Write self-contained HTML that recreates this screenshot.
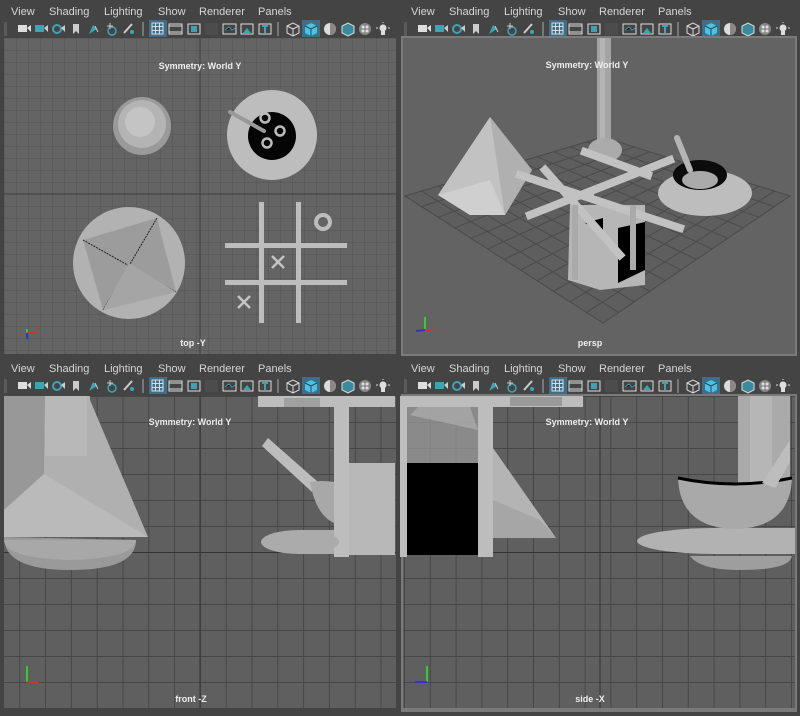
<!DOCTYPE html>
<html><head><meta charset="utf-8"><style>
html,body{margin:0;padding:0;background:#444;width:800px;height:716px;overflow:hidden}
svg{display:block}
text{font-family:"Liberation Sans",sans-serif}
.m{fill:#d6d6d6;font-size:11px}
.l{fill:#eee;font-size:9px;font-weight:bold}
</style></head><body>
<svg width="800" height="716" viewBox="0 0 800 716" xmlns="http://www.w3.org/2000/svg">
<defs>
<pattern id="gt" x="4" y="38" width="12" height="12" patternUnits="userSpaceOnUse"><rect width="12" height="12" fill="#646464"/><path d="M0 0H12M0 0V12" stroke="#535353" stroke-width="1"/></pattern>
<pattern id="gf" x="-6.5" y="396" width="25.8" height="26" patternUnits="userSpaceOnUse"><rect width="26" height="26" fill="#5f5f5f"/><path d="M0 0.5H26M0.5 0V26" stroke="#474747" stroke-width="1"/></pattern>
<pattern id="gs" x="404" y="396" width="25.8" height="26" patternUnits="userSpaceOnUse"><rect width="26" height="26" fill="#5f5f5f"/><path d="M0 0.5H26M0.5 0V26" stroke="#474747" stroke-width="1"/></pattern>
<g id="tb">
 <rect x="4" y="22" width="3" height="14" fill="#5a5a5a"/>
 <rect x="18" y="25" width="9" height="7" fill="#ddd"/><path d="M27 28l4-3v7z" fill="#ddd"/>
 <rect x="35" y="25" width="9" height="7" fill="#3fa3b5"/><path d="M44 28l4-3v7z" fill="#ccc"/>
 <circle cx="57" cy="29" r="4" fill="none" stroke="#3fa3b5" stroke-width="2"/><path d="M61 28l4-3v7z" fill="#ccc"/>
 <path d="M73 24h6v10l-3-3-3 3z" fill="#ccc"/>
 <path d="M89 34l4-9 4 4z" fill="#3fa3b5"/><path d="M95 26l3 6" stroke="#ccc"/>
 <circle cx="112" cy="31" r="4" fill="none" stroke="#3fa3b5" stroke-width="1.5"/><path d="M107 26h6M110 23v6" stroke="#ccc"/>
 <path d="M124 33l8-9" stroke="#ccc" stroke-width="2"/><circle cx="132" cy="32" r="2" fill="#3fa3b5"/>
 <rect x="142" y="22" width="2" height="14" fill="#777"/>
 <rect x="149" y="20" width="18" height="17" fill="#3f6e8a"/>
 <rect x="152" y="23" width="11" height="11" fill="none" stroke="#ddd"/><path d="M155.5 23v11M159.5 23v11M152 26.5h11M152 30.5h11" stroke="#ddd"/>
 <rect x="169" y="24" width="13" height="10" fill="none" stroke="#ddd"/><path d="M169 26h13M169 32h13" stroke="#ddd"/>
 <rect x="188" y="24" width="12" height="10" fill="none" stroke="#ddd"/><rect x="191" y="26" width="6" height="6" fill="#3fa3b5"/>
 <rect x="205" y="23" width="13" height="12" fill="#4c4c4c"/>
 <rect x="223" y="24" width="13" height="10" fill="none" stroke="#ddd"/><path d="M225 30l4-3 3 3 3-2" stroke="#3fa3b5"/>
 <rect x="241" y="24" width="12" height="10" fill="none" stroke="#ddd"/><path d="M243 33l4-5 4 5z" fill="#3fa3b5"/>
 <rect x="259" y="24" width="12" height="10" fill="none" stroke="#ddd"/><path d="M262 26h6M265 26v7" stroke="#3fa3b5" stroke-width="2"/>
 <rect x="277" y="22" width="2" height="14" fill="#777"/>
 <path d="M287 26l6-3 6 3v7l-6 3-6-3z M287 26l6 3 6-3 M293 29v7" fill="none" stroke="#ddd"/>
 <rect x="302" y="20" width="18" height="17" fill="#3f6e8a"/>
 <path d="M305 26l6-3 6 3v7l-6 3-6-3z" fill="#4fc3dd"/><path d="M305 26l6 3 6-3M311 29v7" stroke="#246" fill="none"/>
 <circle cx="330" cy="29" r="6" fill="#ddd"/><path d="M330 23a6 6 0 0 1 0 12z" fill="#888"/>
 <path d="M342 26l6-3 6 3v7l-6 3-6-3z" fill="#3a8aa0" stroke="#ddd"/>
 <circle cx="365" cy="29" r="6" fill="#888"/><circle cx="363" cy="27" r="1.5" fill="#ddd"/><circle cx="367" cy="31" r="1.5" fill="#ddd"/><circle cx="363" cy="31" r="1.5" fill="#ddd"/><circle cx="367" cy="27" r="1.5" fill="#ddd"/>
 <circle cx="383" cy="28" r="3.5" fill="#ddd"/><rect x="381" y="31" width="4" height="4" fill="#ddd"/><path d="M376 28h2M388 28h2M383 22v1" stroke="#ddd"/>
</g>
<g id="mn">
 <text class="m" x="11" y="15">View</text><text class="m" x="49" y="15">Shading</text><text class="m" x="104" y="15">Lighting</text><text class="m" x="158" y="15">Show</text><text class="m" x="199" y="15">Renderer</text><text class="m" x="258" y="15">Panels</text>
</g>
</defs>

<use href="#mn"/><use href="#tb"/>
<use href="#mn" x="400"/><use href="#tb" x="400"/>
<use href="#mn" y="357"/><use href="#tb" y="357"/>
<use href="#mn" x="400" y="357"/><use href="#tb" x="400" y="357"/>

<!-- TOP VIEW -->
<rect x="4" y="38" width="392" height="316" fill="url(#gt)"/>
<path d="M4 194H396M200 38V354" stroke="#3e3e3e"/>
<circle cx="142" cy="126" r="29" fill="#9a9a9a"/><circle cx="142" cy="124" r="24" fill="#b4b4b4"/><circle cx="140" cy="122" r="15" fill="#c4c4c4"/>
<circle cx="272" cy="135" r="45" fill="#bdbdbd"/><circle cx="272" cy="136" r="24" fill="#050505"/>
<g fill="none" stroke="#bbb" stroke-width="2.5"><circle cx="265" cy="118" r="4.5"/><circle cx="280" cy="131" r="4.5"/><circle cx="267" cy="143" r="4.5"/></g>
<path d="M230 112L264 131" stroke="#999" stroke-width="4" stroke-linecap="round"/>
<circle cx="129" cy="263" r="56" fill="#b2b2b2"/>
<path d="M157 218L176 292L103 310L83 240Z" fill="#9c9c9c"/>
<path d="M83 240L176 292M157 218L103 310" stroke="#222" stroke-width="1" stroke-dasharray="2 1"/>
<path d="M129 263L176 292L103 310Z" fill="#a5a5a5"/>
<g fill="#bdbdbd"><rect x="259" y="202" width="5" height="121"/><rect x="296" y="202" width="5" height="121"/><rect x="225" y="243" width="122" height="5"/><rect x="225" y="280" width="122" height="5"/></g>
<circle cx="323" cy="222" r="7" fill="none" stroke="#bdbdbd" stroke-width="4"/>
<path d="M272 256l12 12M284 256l-12 12M238 296l12 12M250 296l-12 12" stroke="#c4c4c4" stroke-width="2.5"/>
<text class="l" x="200" y="69" text-anchor="middle">Symmetry: World Y</text>
<text class="l" x="193" y="346" text-anchor="middle">top -Y</text>
<path d="M27 329V337" stroke="#3c3" stroke-width="2"/><path d="M27 333h10" stroke="#c33" stroke-width="2"/><path d="M27 333v6" stroke="#33c" stroke-width="2"/>
<text x="36" y="330" fill="#c33" font-size="7">x</text>

<!-- PERSP -->
<rect x="401" y="36" width="396" height="320" fill="#7a7a7a"/>
<rect x="403" y="38" width="392" height="316" fill="#636363"/>
<g stroke="#4a4a4a" stroke-width="1" fill="none">
<path d="M405 196L603 137L790 196L603 323Z" fill="#5e5e5e"/>
<path d="M421.5 191.1L618.6 312.4M438 186.2L634.2 301.8M454.5 181.3L649.8 291.3M471 176.3L665.3 280.7M487.5 171.4L680.9 270.1M504 166.5L696.5 259.5M520.5 161.6L712.1 248.9M537 156.7L727.7 238.3M553.5 151.8L743.3 227.8M570 146.8L758.8 217.2M586.5 141.9L774.4 206.6"/>
<path d="M421.5 206.6L618.6 141.9M438 217.2L634.2 146.8M454.5 227.8L649.8 151.8M471 238.3L665.3 156.7M487.5 248.9L680.9 161.6M504 259.5L696.5 166.5M520.5 270.1L712.1 171.4M537 280.7L727.7 176.3M553.5 291.3L743.3 181.3M570 301.8L758.8 186.2M586.5 312.4L774.4 191.1"/>
</g>
<rect x="597" y="38" width="14" height="114" fill="#a4a4a4"/><rect x="600" y="38" width="5" height="114" fill="#b4b4b4"/>
<ellipse cx="605" cy="150" rx="17" ry="12" fill="#ababab"/>
<path d="M490 117L438 195L470 215L505 215L532 170Z" fill="#c2c2c2"/><path d="M490 117L505 215L532 170Z" fill="#b0b0b0"/><path d="M438 195L470 215L505 215L490 180Z" fill="#cfcfcf"/>
<ellipse cx="705" cy="193" rx="47" ry="23" fill="#bdbdbd"/>
<ellipse cx="700" cy="175" rx="27" ry="15" fill="#0c0c0c"/><ellipse cx="700" cy="180" rx="18" ry="9" fill="#aaa"/>
<path d="M677 138L690 170" stroke="#b5b5b5" stroke-width="6" stroke-linecap="round"/>
<path d="M570 205L645 205L645 285L600 290L568 280Z" fill="#b6b6b6"/>
<path d="M618 228L645 222L645 270L618 283Z" fill="#000"/><path d="M585 223L603 218L603 232Z" fill="#000"/>
<g stroke="#c2c2c2" stroke-width="8" stroke-linecap="square">
<path d="M520 175L680 228M530 215L670 160M585 152L648 175M570 195L590 195M545 170L620 255"/>
</g>
<g stroke="#aaa" stroke-width="6"><path d="M575 205V280M633 205V270"/></g>
<text class="l" x="587" y="68" text-anchor="middle">Symmetry: World Y</text>
<text class="l" x="590" y="346" text-anchor="middle">persp</text>
<path d="M425 317V330" stroke="#3c3" stroke-width="2"/><path d="M425 330h8" stroke="#c33" stroke-width="2"/><path d="M425 330l-9 1" stroke="#33c" stroke-width="2"/>

<!-- FRONT -->
<rect x="4" y="396" width="392" height="312" fill="url(#gf)"/>
<path d="M4 552.5H396M200 396V708" stroke="#333"/>
<path d="M4 537Q4 570 70 570Q136 570 136 540Z" fill="#9a9a9a"/><path d="M4 540H136Q136 558 70 560Q4 558 4 540Z" fill="#a8a8a8"/>
<path d="M4 396H90V400L148 537H4Z" fill="#b0b0b0"/><path d="M4 396H45L44 474L4 510Z" fill="#989898"/><path d="M4 510L44 474L148 537H4Z" fill="#bababa"/>
<rect x="45" y="396" width="42" height="60" fill="#b8b8b8"/>
<rect x="258" y="396" width="137" height="11" fill="#bdbdbd"/><rect x="284" y="398" width="36" height="9" fill="#a0a0a0"/>
<rect x="334" y="407" width="15" height="150" fill="#bdbdbd"/><rect x="349" y="463" width="46" height="92" fill="#b8b8b8"/>
<path d="M262 446L268 438L318 482L312 492Z" fill="#bdbdbd"/>
<path d="M310 482Q322 480 334 482V523Q316 515 310 482Z" fill="#a8a8a8"/>
<ellipse cx="300" cy="542" rx="39" ry="12" fill="#ababab"/><rect x="300" y="530" width="34" height="24" fill="#ababab"/>
<text class="l" x="190" y="425" text-anchor="middle">Symmetry: World Y</text>
<text class="l" x="191" y="702" text-anchor="middle">front -Z</text>
<path d="M27 666V682" stroke="#3c3" stroke-width="2"/><path d="M27 682h12" stroke="#c33" stroke-width="2"/>

<!-- SIDE -->
<rect x="401" y="394" width="396" height="318" fill="#7a7a7a"/>
<rect x="403" y="396" width="392" height="312" fill="url(#gs)"/>
<path d="M600 396V708M403 552.5H795" stroke="#333"/>
<path d="M407 407H478V463H407Z" fill="#9c9c9c" opacity=".7"/><path d="M410 415L418 407H470L478 430Z" fill="#b4b4b4" opacity=".6"/>
<path d="M493 448L556 538H493Z" fill="#b4b4b4"/><path d="M493 500L540 520L556 538H493Z" fill="#a6a6a6"/>
<rect x="400" y="396" width="183" height="11" fill="#bdbdbd"/><rect x="510" y="397" width="52" height="9" fill="#9a9a9a"/>
<rect x="400" y="407" width="7" height="150" fill="#bdbdbd"/>
<rect x="478" y="407" width="15" height="150" fill="#bdbdbd"/>
<rect x="407" y="463" width="71" height="92" fill="#000"/>
<rect x="738" y="396" width="52" height="90" fill="#aaa"/><rect x="750" y="396" width="22" height="90" fill="#b6b6b6"/>
<path d="M690 556Q700 570 740 570Q790 570 792 556Z" fill="#9e9e9e"/>
<ellipse cx="715" cy="541" rx="78" ry="13" fill="#b2b2b2"/><rect x="715" y="528" width="80" height="26" fill="#b2b2b2"/>
<path d="M678 478Q735 488 792 478Q790 528 735 529Q680 528 678 478Z" fill="#a9a9a9"/>
<path d="M678 478Q735 490 792 478" stroke="#000" stroke-width="3" fill="none"/>
<path d="M762 483L790 440V462L775 488Z" fill="#bdbdbd"/>
<text class="l" x="587" y="425" text-anchor="middle">Symmetry: World Y</text>
<text class="l" x="590" y="702" text-anchor="middle">side -X</text>
<path d="M427 666V682" stroke="#3c3" stroke-width="2"/><path d="M427 682h-12" stroke="#33c" stroke-width="2"/>
</svg>
</body></html>
